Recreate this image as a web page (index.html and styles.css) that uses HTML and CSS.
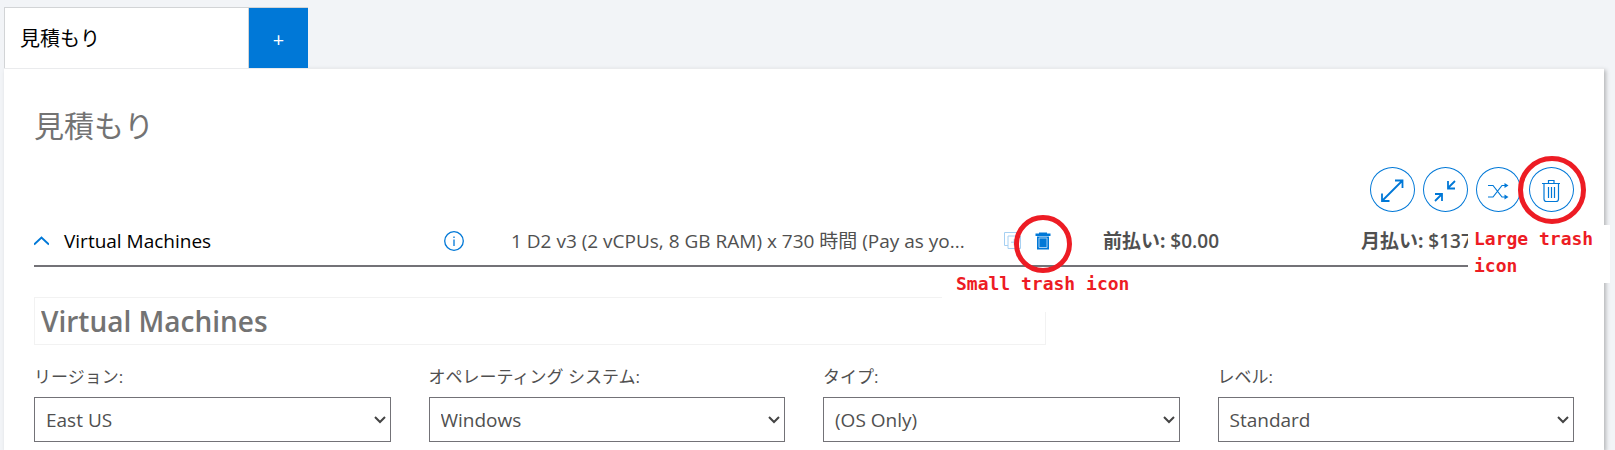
FILE: index.html
```html
<!DOCTYPE html>
<html lang="ja">
<head>
<meta charset="utf-8">
<meta name="viewport" content="width=device-width, initial-scale=1">
<title>見積もり</title>
<link rel="stylesheet" href="styles.css">
</head>
<body>
<nav class="tabs">
  <button class="tab" type="button">見積もり</button>
  <button class="tab-add" type="button" aria-label="+">+</button>
</nav>
<main class="panel">
  <h1 class="panel-title">見積もり</h1>
  <div class="toolbar">
    <button class="round" type="button"><svg viewBox="0 0 45 45"><path d="M12 34 32.500 13.500M25 13.500H32.500V21M12 26.500V34H19.500"/></svg></button>
    <button class="round" type="button"><svg viewBox="0 0 45 45"><path d="M32 14 25 21M25 14V21.500H32M12 34 19 27M12 27H19V34"/></svg></button>
    <button class="round" type="button"><svg viewBox="0 0 45 45"><path class="thin" d="M12 18.500H17L26 30H30M12 30H17L26 18.500H30"/><path class="solid" d="M28.500 16 32.500 18.500 28.500 21ZM28.500 27.500 32.500 30 28.500 32.500Z"/></svg></button>
    <div class="marked">
      <button class="round" type="button"><svg viewBox="0 0 45 45"><path class="thin" d="M13 16.500H31M15 17V32Q15 34.500 17.500 34.500H27Q29.500 34.500 29.500 32V17M19.500 16V13.500H25V16M19.500 20V31M22.500 20V31M25.500 20V31"/></svg></button>
      <span class="ring ring-large"></span>
    </div>
  </div>
  <section class="item">
    <div class="item-name">
      <svg class="chevron" viewBox="0 0 15 10"><path d="M0 8.500 7.500 1.500 15 8.500"/></svg>
      <span>Virtual Machines</span>
    </div>
    <svg class="info" viewBox="0 0 20 20"><circle cx="10" cy="10" r="9.300"/><path d="M10 8.500V15M10 5.500V7"/></svg>
    <div class="item-desc">1 D2 v3 (2 vCPUs, 8 GB RAM) x 730 時間 (Pay as yo...</div>
    <div class="item-actions">
      <button class="mini copy" type="button"><svg viewBox="0 0 17 17"><path d="M4 13.500H.5V.5H13.500V4M4 4H16.500V16.500H4ZM10.200 7V13.500M7 10.200H13.500"/></svg></button>
      <div class="marked">
        <button class="mini trash" type="button"><svg viewBox="0 0 16 18"><path class="solid" d="M.5 1.500H4V.5H12V1.500H15.500V4H.5ZM2 4.500H14V17.500H2Z"/><path class="inner" d="M4 6H12V15.500H4Z"/></svg></button>
        <span class="ring ring-small"></span>
        <span class="note note-small">Small trash icon</span>
      </div>
    </div>
    <div class="cost"><b>前払い:</b> $0.00</div>
    <div class="cost"><b>月払い:</b> $137</div>
    <span class="note note-large">Large trash icon</span>
  </section>
  <input class="name-box" type="text" value="Virtual Machines" aria-label="Virtual Machines">
  <form class="fields">
    <div class="field">
      <label for="region">リージョン:</label>
      <div class="select"><select id="region"><option>East US</option></select><svg viewBox="0 0 12 8"><path d="M1 1 6 6 11 1"/></svg></div>
    </div>
    <div class="field">
      <label for="os">オペレーティング システム:</label>
      <div class="select"><select id="os"><option>Windows</option></select><svg viewBox="0 0 12 8"><path d="M1 1 6 6 11 1"/></svg></div>
    </div>
    <div class="field">
      <label for="type">タイプ:</label>
      <div class="select"><select id="type"><option>(OS Only)</option></select><svg viewBox="0 0 12 8"><path d="M1 1 6 6 11 1"/></svg></div>
    </div>
    <div class="field">
      <label for="tier">レベル:</label>
      <div class="select"><select id="tier"><option>Standard</option></select><svg viewBox="0 0 12 8"><path d="M1 1 6 6 11 1"/></svg></div>
    </div>
  </form>
</main>
</body>
</html>
```
FILE: styles.css
```css
* { box-sizing: border-box; }

body {
  margin: 0;
  padding: 7px 11px 0 4px;
  background: #f2f4f7;
  color: #505050;
  font: 19px/28px "Open Sans", "Noto Sans CJK JP", sans-serif;
  overflow: hidden;
}

button, input, select { font: inherit; color: inherit; margin: 0; }
button { cursor: pointer; }
svg { display: block; fill: none; }

.tabs { display: flex; height: 61px; }

.tab {
  width: 245px;
  padding: 2px 15px 0;
  border: 1px solid #d2d4d6;
  border-bottom: 0;
  background: #fff;
  color: #000;
  font-size: 20px;
  text-align: left;
}

.tab-add {
  width: 59px;
  padding: 4px 0 0;
  border: 0;
  border-top: 1px solid #d2d4d6;
  background: #0078d7;
  color: #fff;
  font-size: 20px;
}

.panel {
  padding: 37px 30px 8px;
  border-top: 1px solid #eaebed;
  background: #fff;
  box-shadow: 2px 2px 4px rgba(0, 0, 0, .25);
}

.panel-title {
  margin: 0;
  color: #737373;
  font-size: 30px;
  font-weight: 400;
  line-height: 40px;
}

.toolbar {
  display: flex;
  justify-content: flex-end;
  gap: 8px;
  margin-top: 21px;
}

.marked { position: relative; }

.round {
  display: block;
  width: 45px;
  height: 45px;
  padding: 0;
  border: 0;
  border-radius: 50%;
  background: #fff;
  box-shadow: inset 0 0 0 1px #0078d7;
}

.round path { stroke: #0078d7; stroke-width: 1.8; }
.round .thin { stroke-width: 1.2; }
.round .solid { fill: #0078d7; stroke: none; }

.ring {
  position: absolute;
  top: 50%;
  left: 50%;
  border: 5px solid #ed1c24;
  border-radius: 50%;
  transform: translate(-50%, -50%);
  pointer-events: none;
}

.ring-large { width: 68px; height: 68px; }
.ring-small { top: 12px; width: 58px; height: 58px; }

.item {
  position: relative;
  display: grid;
  grid-template-columns: 410fr 67fr 493fr 99fr 258fr 213fr;
  align-items: center;
  height: 55px;
  padding-top: 4px;
  border-bottom: 2px solid #737277;
  white-space: nowrap;
}

.item-name { display: flex; align-items: center; gap: 15px; color: #000; }
.chevron { width: 15px; height: 10px; stroke: #0078d7; stroke-width: 2; }
.info { width: 20px; height: 20px; stroke: #0078d7; stroke-width: 1.3; }
.item-actions { display: flex; align-items: center; gap: 14px; }
.item-actions .marked { z-index: 1; }

.mini { display: block; padding: 0; border: 0; background: none; }
.copy svg { width: 17px; height: 17px; stroke: #a6d0f2; }
.trash svg { width: 16px; height: 18px; }
.trash .solid { fill: #0078d7; }
.trash .inner { fill: #0078d7; stroke: #9fccf1; }

.cost { font-weight: 600; }
.cost b { font-weight: 700; }

.note {
  position: absolute;
  background: #fff;
  color: #ed1c24;
  font: bold 18px/27px "DejaVu Sans Mono", monospace;
}

.note-small { top: 36px; left: -93px; width: 200px; height: 44px; padding: 2px 0 0 14px; z-index: -1; }
.note-large { top: 13px; right: -36px; width: 142px; height: 58px; padding-left: 6px; white-space: normal; }

.name-box {
  display: block;
  width: 65.7%;
  height: 48px;
  margin-top: 30px;
  padding: 0 6px;
  border: 1px solid #f2f2f2;
  color: #737373;
  background: #fff;
  font-size: 28px;
  font-weight: 600;
}

.fields {
  display: grid;
  grid-template-columns: repeat(4, minmax(0, 1fr));
  gap: 38px;
  margin-top: 18px;
}

.field label { display: block; margin-bottom: 6px; font-size: 17px; }

.select { display: grid; align-items: center; }
.select > * { grid-area: 1 / 1; }

.select select {
  width: 100%;
  height: 45px;
  padding: 0 11px;
  border: 1px solid #737277;
  border-radius: 0;
  background: #fff;
  appearance: none;
}

.select svg {
  justify-self: end;
  width: 12px;
  height: 8px;
  margin-right: 5px;
  stroke: #444;
  stroke-width: 2;
  pointer-events: none;
}
```
